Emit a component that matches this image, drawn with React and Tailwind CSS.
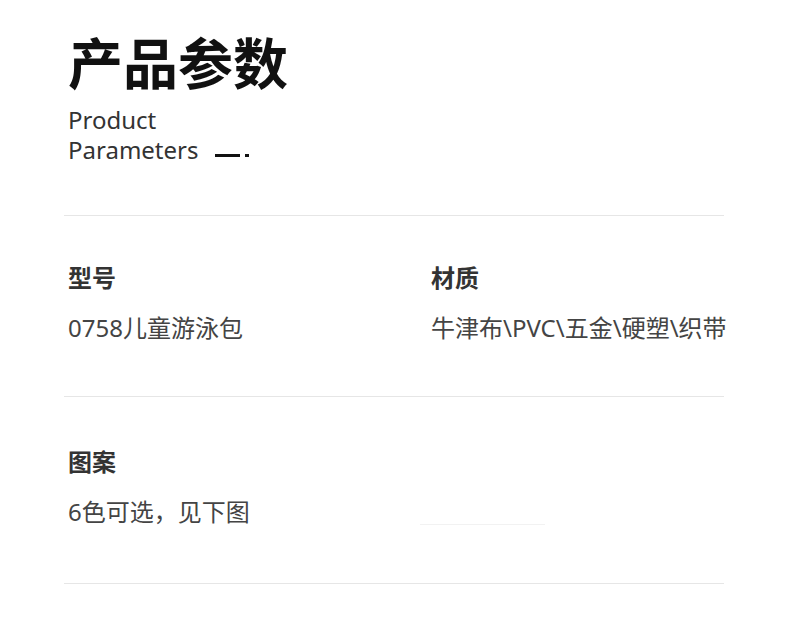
const font = { fontFamily: '"Noto Sans", "Noto Sans CJK SC", sans-serif' }

const rows = [
  {
    cls: 'h-[181px] pt-[50px]',
    items: [
      { label: '型号', value: '0758儿童游泳包' },
      { label: '材质', value: '牛津布\\PVC\\五金\\硬塑\\织带' },
    ],
  },
  {
    cls: 'h-[187px] pt-[53px]',
    items: [
      { label: '图案', value: '6色可选，见下图' },
    ],
  },
]

export default function App() {
  return (
    <div className="w-[790px] h-[644px] bg-white overflow-hidden" style={font}>
      <div className="ml-[64px] w-[660px]">

        {/* Heading */}
        <div className="pt-[33px] pl-[4px] h-[215px]">
          <h1 className="text-[55px] leading-[60px] font-bold text-[#111]">产品参数</h1>
          <div className="mt-[12px] text-[24px] leading-[30px] text-[#333]">
            <div>Product</div>
            <div className="flex items-center">
              <span>Parameters</span>
              <span className="ml-[17px] mt-[10px] w-[25px] h-[3px] bg-[#111]" />
              <span className="ml-[5px] mt-[10px] w-[4px] h-[3px] bg-[#111]" />
            </div>
          </div>
        </div>

        {/* Spec rows */}
        {rows.map((row, i) => (
          <div key={i} className={`border-t border-[#e6e6e6] ${row.cls} relative`}>
            <div className="grid grid-cols-[363px_1fr] pl-[4px]">
              {row.items.map((it) => (
                <div key={it.label}>
                  <div className="text-[24px] leading-[24px] font-bold text-[#333]">{it.label}</div>
                  <div className="mt-[26px] text-[24px] leading-[24px] text-[#444] whitespace-nowrap">{it.value}</div>
                </div>
              ))}
            </div>
            {i === 1 && (
              <div className="absolute left-[356px] top-[127px] w-[125px] h-px bg-[#f2f2f2]" />
            )}
          </div>
        ))}
        <div className="border-t border-[#e6e6e6]" />
      </div>
    </div>
  )
}
